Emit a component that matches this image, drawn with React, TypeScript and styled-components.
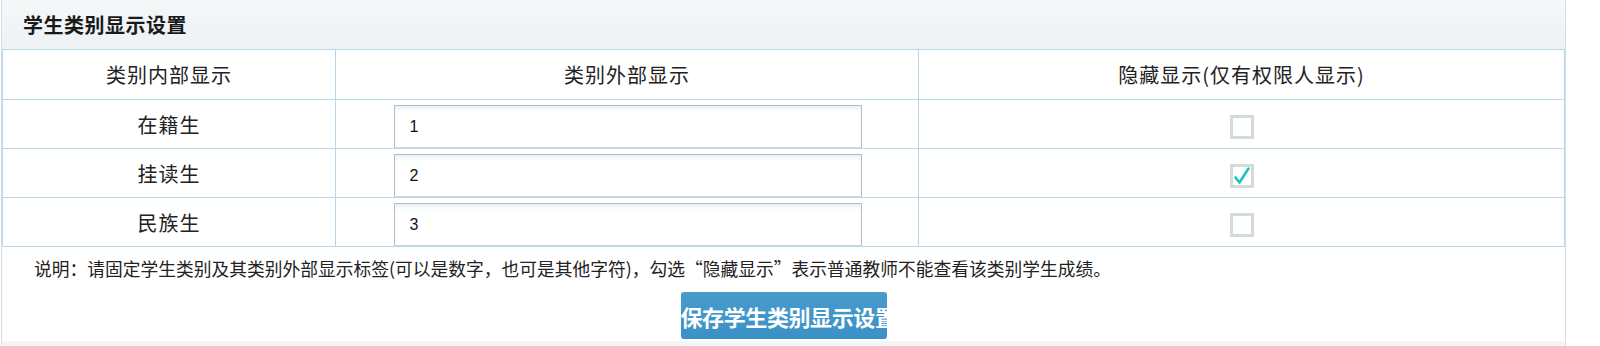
import React from "react";
import styled, { createGlobalStyle } from "styled-components";

const GlobalStyle = createGlobalStyle`
  html, body { margin: 0; padding: 0; background: #ffffff; }
  body { font-family: "Noto Sans CJK SC", "Microsoft YaHei", sans-serif; color: #222; }
`;

const Panel = styled.div`
  width: 1563px;
  margin-left: 1px;
  border-left: 1px solid #d6dee4;
  border-right: 1px solid #d6dee4;
  background: #ffffff;
`;

const PanelHeader = styled.div`
  height: 49px;
  box-sizing: border-box;
  padding-left: 21px;
  display: flex;
  align-items: center;
  background: linear-gradient(#f5f7f8, #eef2f5);
  font-size: 20px;
  font-weight: bold;
  color: #1a1a1a;
  letter-spacing: 0.5px;
`;

const Table = styled.table`
  width: 100%;
  border-collapse: collapse;
  border: 1px solid #b9d6e6;
  table-layout: fixed;
`;

const Th = styled.th<{ $w?: number }>`
  ${(p) => (p.$w ? `width: ${p.$w}px;` : "")}
  height: 50px;
  box-sizing: border-box;
  padding: 0;
  border: 1px solid #b9d6e6;
  font-weight: normal;
  font-size: 20px;
  letter-spacing: 1px;
  color: #222;
  text-align: center;
  vertical-align: middle;
`;

const Td = styled.td<{ $top?: boolean }>`
  height: 48px;
  box-sizing: border-box;
  padding: 0;
  border: 1px solid #b9d6e6;
  font-size: 20px;
  letter-spacing: 1px;
  color: #222;
  text-align: center;
  vertical-align: ${(p) => (p.$top ? "top" : "middle")};
`;

const InputWrap = styled.div`
  display: flex;
  justify-content: center;
  padding-top: 5px;
`;

const TextInput = styled.input`
  width: 468px;
  height: 43px;
  box-sizing: border-box;
  margin: 0 0 0 1px;
  padding: 0 0 0 15px;
  border: 1px solid #b4bcc4;
  border-bottom-color: #c8d8e2;
  box-shadow: inset 0 6px 6px -4px #e6ebef;
  font-family: "Liberation Sans", Arial, sans-serif;
  font-size: 16px;
  color: #111;
  background: #fff;
  outline: none;
  display: block;
`;

const CheckBox = styled.span`
  display: inline-flex;
  align-items: center;
  justify-content: center;
  width: 24px;
  height: 24px;
  box-sizing: border-box;
  border: 3px solid #d2ddd3;
  background: #fff;
  vertical-align: middle;
`;

const Note = styled.div`
  box-sizing: border-box;
  height: 45px;
  padding: 10px 0 0 32px;
  font-size: 17.75px;
  color: #222;
  line-height: 22px;
  white-space: nowrap;
`;

const ButtonRow = styled.div`
  display: flex;
  justify-content: center;
  padding-bottom: 2px;
`;

const SaveButton = styled.button`
  width: 206px;
  height: 47px;
  padding: 0;
  border: none;
  border-radius: 3px;
  background: linear-gradient(#479ccb, #3b91c6);
  color: #fff;
  font-family: "Noto Sans CJK SC", sans-serif;
  font-weight: bold;
  font-size: 22px;
  letter-spacing: -0.4px;
  white-space: nowrap;
  overflow: hidden;
  text-align: center;
`;

const FooterStrip = styled.div`
  height: 5px;
  background: #f4f6f8;
`;

const Check = () => (
  <svg width="18" height="18" viewBox="0 0 18 18">
    <path
      d="M2.5 10.5 L6.5 15.5 L15.5 1.5"
      fill="none"
      stroke="#1fc3c6"
      strokeWidth="2.6"
      strokeLinecap="round"
      strokeLinejoin="round"
    />
  </svg>
);

const rows = [
  { name: "在籍生", value: "1", hidden: false },
  { name: "挂读生", value: "2", hidden: true },
  { name: "民族生", value: "3", hidden: false },
];

export default function App() {
  return (
    <>
      <GlobalStyle />
      <Panel>
        <PanelHeader>学生类别显示设置</PanelHeader>
        <Table>
          <thead>
            <tr>
              <Th $w={333}>类别内部显示</Th>
              <Th $w={583}>类别外部显示</Th>
              <Th>隐藏显示(仅有权限人显示)</Th>
            </tr>
          </thead>
          <tbody>
            {rows.map((r) => (
              <tr key={r.name}>
                <Td>{r.name}</Td>
                <Td $top>
                  <InputWrap>
                    <TextInput defaultValue={r.value} />
                  </InputWrap>
                </Td>
                <Td>
                  <CheckBox>{r.hidden ? <Check /> : null}</CheckBox>
                </Td>
              </tr>
            ))}
          </tbody>
        </Table>
        <Note>
          说明：请固定学生类别及其类别外部显示标签(可以是数字，也可是其他字符)，勾选“隐藏显示”表示普通教师不能查看该类别学生成绩。
        </Note>
        <ButtonRow>
          <SaveButton>保存学生类别显示设置</SaveButton>
        </ButtonRow>
        <FooterStrip />
      </Panel>
    </>
  );
}
